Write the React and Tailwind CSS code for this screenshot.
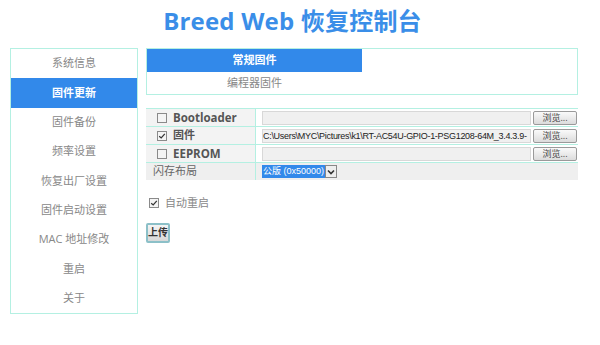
import React from "react";

const menu = ["系统信息", "固件更新", "固件备份", "频率设置", "恢复出厂设置", "固件启动设置", "MAC 地址修改", "重启", "关于"];

const Check = ({ checked }) => (
  <span className="inline-flex shrink-0 items-center justify-center w-[10px] h-[10px] border border-[#8a8a8a] bg-[#f4f4f4] mr-[6px]">
    {checked && (
      <svg width="8" height="8" viewBox="0 0 8 8">
        <path d="M1.2 4.2 L3.2 6 L6.8 1.8" fill="none" stroke="#333" strokeWidth="1.2" />
      </svg>
    )}
  </span>
);

const Browse = () => (
  <button className="shrink-0 w-[44px] h-[14px] ml-[2px] border border-[#9a9a9a] rounded-[2px] bg-gradient-to-b from-[#fafafa] to-[#dcdcdc] text-[9px] leading-[12px] text-[#444]">
    浏览...
  </button>
);

const FileRow = ({ label, checked, path, cjk }) => (
  <div className="flex h-[18px] border-b border-[#b4f0e2]">
    <div className="w-[110px] shrink-0 border-r border-[#b4f0e2] bg-[#f3f3f3] flex items-center pl-[11px]">
      <Check checked={checked} />
      <span className={`font-bold text-[#555] ${cjk ? "text-[11px]" : "text-[11.5px]"}`}>{label}</span>
    </div>
    <div className="flex-1 min-w-0 flex items-center pl-[6px] pr-[1px]">
      <div className="flex-1 min-w-0 h-[14px] bg-[#f0f0f0] border border-[#d8d8d8] text-[9px] leading-[12px] text-[#222] overflow-hidden whitespace-nowrap font-['Liberation_Sans',sans-serif] tracking-[-0.3px]">
        {path}
      </div>
      <Browse />
    </div>
  </div>
);

export default function App() {
  return (
    <div className="w-[600px] h-[345px] bg-white font-['Open_Sans','Noto_Sans_CJK_SC',sans-serif] overflow-hidden">
      <div className="h-[42px] flex items-center justify-center pr-[15px]">
        <h1 className="text-[24px] font-bold text-[#3a8ee8] tracking-[0.2px]">Breed Web 恢复控制台</h1>
      </div>
      <div className="flex pl-[10px] pt-[6px] gap-[8px]">
        <div className="w-[128px] h-[266px] border border-[#b4f0e2] flex flex-col">
          {menu.map((m, i) => (
            <div
              key={m}
              className={`h-[29.5px] flex items-center justify-center text-[11px] ${
                i === 1 ? "bg-[#3289ea] text-white font-bold" : "text-[#888]"
              }`}
            >
              {m}
            </div>
          ))}
        </div>
        <div className="w-[432px]">
          <div className="h-[47px] border border-[#b4f0e2]">
            <div className="w-[215px]">
              <div className="h-[23px] bg-[#3289ea] text-white font-bold text-[11px] flex items-center justify-center">常规固件</div>
              <div className="h-[22px] text-[#888] text-[11px] flex items-center justify-center">编程器固件</div>
            </div>
          </div>
          <div className="mt-[13px] border-t border-[#b4f0e2]">
            <FileRow label="Bootloader" path="" />
            <FileRow label="固件" cjk checked path="C:\Users\MYC\Pictures\k1\RT-AC54U-GPIO-1-PSG1208-64M_3.4.3.9-" />
            <FileRow label="EEPROM" path="" />
            <div className="flex h-[17px] bg-[#efefef]">
              <div className="w-[110px] shrink-0 border-r border-[#b4f0e2] flex items-center pl-[7px] text-[11px] text-[#666]">闪存布局</div>
              <div className="flex items-center pl-[6px]">
                <span className="h-[13px] bg-[#3289ea] text-white text-[9px] leading-[13px] px-[1px] font-['Liberation_Sans','Noto_Sans_CJK_SC',sans-serif]">公版 (0x50000)</span>
                <span className="w-[12px] h-[13px] border border-[#888] bg-[#eee] flex items-center justify-center">
                  <svg width="8" height="6" viewBox="0 0 8 6">
                    <path d="M1 1.5 L4 4.5 L7 1.5" fill="none" stroke="#333" strokeWidth="1.6" />
                  </svg>
                </span>
              </div>
            </div>
          </div>
          <div className="mt-[15px] flex items-center pl-[3px] text-[11px] text-[#888]">
            <Check checked />
            自动重启
          </div>
          <button className="mt-[11px] w-[24px] h-[20px] border-2 border-[#8cc0c8] rounded-[2px] bg-gradient-to-b from-[#f4f4f4] to-[#d8d8d8] text-[10px] font-bold text-[#333] flex items-center justify-center">
            上传
          </button>
        </div>
      </div>
    </div>
  );
}
